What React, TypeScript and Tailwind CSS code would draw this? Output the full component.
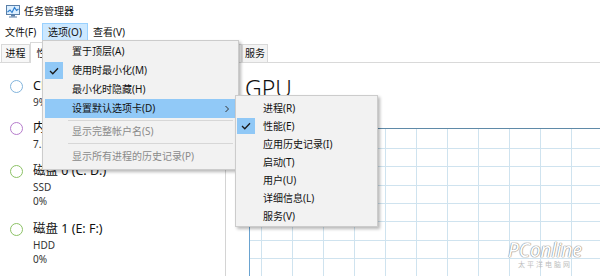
import React from "react";

const FONT = { fontFamily: '"Noto Sans", "Noto Sans CJK SC", sans-serif' };

function TaskIcon() {
  return (
    <svg width="16" height="14" viewBox="0 0 16 14">
      <rect x="1.5" y="1.5" width="13" height="9" fill="#dcefff" stroke="#5a7fa8" />
      <polyline points="2.5,8 5,6 7,8.5 9.5,3.5 11.5,6.5 13.5,5" fill="none" stroke="#2f7fd0" strokeWidth="1.2" />
      <rect x="6" y="11" width="4" height="1.5" fill="#5a7fa8" />
      <rect x="4" y="12.5" width="8" height="1" fill="#5a7fa8" />
    </svg>
  );
}

function Check() {
  return (
    <svg width="10" height="8" viewBox="0 0 10 8">
      <polyline points="1,4 3.8,6.8 9,1.2" fill="none" stroke="#1a1a1a" strokeWidth="1.3" />
    </svg>
  );
}

function Item({
  label,
  checked,
  active,
  disabled,
  arrow,
  h = "h-[19px]",
  textX = "pl-[27px]",
}: {
  label: string;
  checked?: boolean;
  active?: boolean;
  disabled?: boolean;
  arrow?: boolean;
  h?: string;
  textX?: string;
}) {
  return (
    <div className={`relative flex items-center ${h} ${active ? "bg-[#91c9f7]" : ""}`}>
      {checked && (
        <div className="absolute left-0 top-[1px] bottom-[1px] w-[18px] bg-[#90c8f6] flex items-center justify-center">
          <Check />
        </div>
      )}
      <span className={`${textX} text-[10px] ${disabled ? "text-[#8a8a8a]" : "text-[#111]"}`}>{label}</span>
      {arrow && (
        <svg className="absolute right-[6px]" width="6" height="8" viewBox="0 0 6 8">
          <polyline points="1.5,1 4.5,4 1.5,7" fill="none" stroke="#333" strokeWidth="1" />
        </svg>
      )}
    </div>
  );
}

function Sep({ cls }: { cls: string }) {
  return (
    <div className={cls}>
      <div className="ml-[23px] mr-[3px] h-px bg-[#d7d7d7]" />
    </div>
  );
}

function Resource({
  color,
  title,
  lines,
  cls,
}: {
  color: string;
  title: string;
  lines: string[];
  cls: string;
}) {
  return (
    <div className={`flex ${cls}`}>
      <div className="w-[33px] h-[18px] flex items-center justify-center">
        <span className={`block w-[13px] h-[13px] rounded-full border-[1.5px] ${color}`} />
      </div>
      <div className="flex flex-col">
        <span className="text-[12.5px] leading-[18px] text-[#111] whitespace-nowrap">{title}</span>
        {lines.map((l) => (
          <span key={l} className="text-[10px] leading-[14px] text-[#333] whitespace-nowrap">
            {l}
          </span>
        ))}
      </div>
    </div>
  );
}

function Grid() {
  const v = Array.from({ length: 12 }, (_, i) => 11 + i * 31);
  const hz = Array.from({ length: 8 }, (_, i) => 19 + i * 18.3);
  return (
    <svg width="360" height="160" className="block">
      {v.map((x) => (
        <line key={x} x1={x + 0.5} y1="0" x2={x + 0.5} y2="160" stroke="#cfe3ef" />
      ))}
      {hz.map((y) => (
        <line key={y} x1="0" y1={Math.round(y) + 0.5} x2="360" y2={Math.round(y) + 0.5} stroke="#cfe3ef" />
      ))}
    </svg>
  );
}

export default function App() {
  const tabs = [
    { t: "进程", w: "w-[29px]" },
    { t: "性能", w: "w-[33px]", sel: true },
    { t: "应用历史记录", w: "w-[72px]" },
    { t: "启动", w: "w-[30px]" },
    { t: "用户", w: "w-[30px]" },
    { t: "详细信息", w: "w-[47px]" },
  ];
  return (
    <div className="relative w-[600px] h-[276px] overflow-hidden bg-white flex flex-col" style={FONT}>
      {/* title bar */}
      <div className="h-[22px] flex items-center pl-[5px] gap-[3px] shrink-0">
        <TaskIcon />
        <span className="text-[10px] text-[#111]">任务管理器</span>
      </div>

      {/* menu bar */}
      <div className="h-[20px] flex items-center shrink-0 text-[10px] text-[#111]">
        <div className="w-[42px] pl-[5px]">文件(F)</div>
        <div className="w-[46px] h-[18px] flex items-center justify-center bg-[#cce8ff] border border-[#99d1ff]">选项(O)</div>
        <div className="pl-[5px]">查看(V)</div>
      </div>

      {/* tabs */}
      <div className="h-[21px] flex items-end shrink-0 border-b border-[#d9d9d9] pl-[1px] text-[10px] text-[#111]">
        {tabs.map((tb) => (
          <div
            key={tb.t}
            className={`${tb.w} flex items-center justify-center whitespace-nowrap overflow-hidden border-t border-l border-r ${
              tb.sel ? "h-[21px] bg-white border-[#d9d9d9] -mb-px" : "h-[18px] bg-[#f7f7f7] border-[#d9d9d9]"
            }`}
          >
            {tb.t}
          </div>
        ))}
        <div className="w-[26px] h-[18px] flex items-center justify-center bg-[#f3f3f3] border-t border-l border-r border-[#d9d9d9]">
          服务
        </div>
      </div>

      {/* body */}
      <div className="flex flex-1 min-h-0">
        <div className="w-[226px] shrink-0 border-r border-[#d4d4d4] pt-[14px] flex flex-col">
          <Resource color="border-[#82b4dc]" title="CPU" lines={["9%  3.60 GHz"]} cls="" />
          <Resource color="border-[#b67ccc]" title="内存" lines={["7.5/15.9 GB (47%)"]} cls="mt-[10px]" />
          <Resource color="border-[#8cc265]" title="磁盘 0 (C: D:)" lines={["SSD", "0%"]} cls="mt-[11px]" />
          <Resource color="border-[#8cc265]" title="磁盘 1 (E: F:)" lines={["HDD", "0%"]} cls="mt-[12px]" />
        </div>
        <div className="flex-1 flex flex-col min-w-0">
          <div className="pl-[19px] pt-[10px] h-[52px] text-[23px] font-light leading-[30px] text-[#111]">GPU</div>
          <div className="ml-[23px] mt-[13px] border-l border-t border-l-[#6aa3d0] border-t-[#5f8aa8] flex-1 overflow-hidden">
            <Grid />
          </div>
        </div>
      </div>

      {/* options menu */}
      <div className="absolute left-[42px] top-[40px] w-[197px] bg-[#f2f2f2] border border-[#cccccc] shadow-[2px_2px_3px_rgba(0,0,0,0.28)] pt-[1px] pb-[3px] px-[2px]">
        <Item label="置于顶层(A)" />
        <Item label="使用时最小化(M)" checked />
        <Item label="最小化时隐藏(H)" />
        <Item label="设置默认选项卡(D)" active arrow />
        <Sep cls="pt-[2px] pb-[1px]" />
        <Item label="显示完整帐户名(S)" disabled />
        <Sep cls="pt-[2px] pb-[3px]" />
        <Item label="显示所有进程的历史记录(P)" disabled />
      </div>

      {/* submenu */}
      <div className="absolute left-[235px] top-[95px] w-[143px] bg-[#f2f2f2] border border-[#cccccc] shadow-[2px_2px_3px_rgba(0,0,0,0.28)] pt-[3px] pb-[1px] px-[1px]">
        <Item label="进程(R)" h="h-[18px]" textX="pl-[26px]" />
        <Item label="性能(E)" h="h-[18px]" textX="pl-[26px]" checked />
        <Item label="应用历史记录(I)" h="h-[18px]" textX="pl-[26px]" />
        <Item label="启动(T)" h="h-[18px]" textX="pl-[26px]" />
        <Item label="用户(U)" h="h-[18px]" textX="pl-[26px]" />
        <Item label="详细信息(L)" h="h-[18px]" textX="pl-[26px]" />
        <Item label="服务(V)" h="h-[18px]" textX="pl-[26px]" />
      </div>

      {/* watermark */}
      <div className="absolute left-[508px] top-[240px] flex flex-col items-center pointer-events-none">
        <span className="text-[19px] leading-[20px] italic text-white [text-shadow:0_0_1px_#8a8a8a,0_0_1px_#8a8a8a,0_0_1px_#8a8a8a]">PConline</span>
        <span className="text-[7px] leading-[9px] text-[#bdbdbd] tracking-[2px]">太平洋电脑网</span>
      </div>
    </div>
  );
}
